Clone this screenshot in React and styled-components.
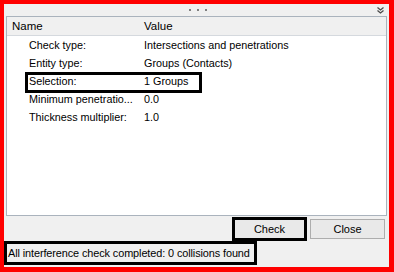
import React from 'react';
import styled, { createGlobalStyle } from 'styled-components';

const GlobalStyle = createGlobalStyle`
  body {
    margin: 0;
    font-family: "Liberation Sans", Arial, sans-serif;
  }
`;

const rows = [
  { name: 'Check type:', value: 'Intersections and penetrations' },
  { name: 'Entity type:', value: 'Groups (Contacts)' },
  { name: 'Selection:', value: '1 Groups', marked: true },
  { name: 'Minimum penetratio...', value: '0.0' },
  { name: 'Thickness multiplier:', value: '1.0' },
];

const Chevrons = () => (
  <svg width="7" height="7" viewBox="0 0 7 7">
    <path d="M0.5 0.5 L3.5 3 L6.5 0.5 M0.5 3.5 L3.5 6 L6.5 3.5" stroke="#4a4a4a" strokeWidth="1.3" fill="none" />
  </svg>
);

const App = () => {
  return (
    <Frame>
      <GlobalStyle />
      <TopStrip>
        <span />
        <Dots>
          <Dot />
          <Dot />
          <Dot />
        </Dots>
        <Collapse>
          <Chevrons />
        </Collapse>
      </TopStrip>
      <Grid>
        <HeaderRow>
          <HeadCell $first>Name</HeadCell>
          <HeadCell>Value</HeadCell>
        </HeaderRow>
        {rows.map(r => (
          <Row key={r.name}>
            <Label>{r.name}</Label>
            <Value>{r.value}</Value>
            {r.marked && <Mark />}
          </Row>
        ))}
      </Grid>
      <Buttons>
        <Button $marked>Check</Button>
        <Button>Close</Button>
      </Buttons>
      <StatusArea>
        <Status>All interference check completed: 0 collisions found</Status>
      </StatusArea>
    </Frame>
  );
};

export default App;

const Frame = styled.div`
  width: 394px;
  height: 272px;
  box-sizing: border-box;
  border-style: solid;
  border-color: #ff0000;
  border-width: 4px 5px 5px 4px;
  background: #f0f0f0;
  display: flex;
  flex-direction: column;
  font-size: 10.8px;
  color: #000;
`;

const TopStrip = styled.div`
  height: 12px;
  display: grid;
  grid-template-columns: 1fr auto 1fr;
  align-items: center;
`;

const Dots = styled.div`
  display: flex;
  gap: 6px;
  margin-left: 2px;
`;

const Dot = styled.div`
  width: 2px;
  height: 2px;
  background: #808080;
`;

const Collapse = styled.div`
  justify-self: end;
  margin-right: 5px;
  display: flex;
`;

const Grid = styled.div`
  margin: 0 2px;
  height: 200px;
  box-sizing: border-box;
  border: 1px solid #aab3bd;
  background: #fff;
  flex: none;
`;

const HeaderRow = styled.div`
  height: 18px;
  border-bottom: 1px solid #d5d9de;
  background: #f0f0f0;
  display: grid;
  grid-template-columns: 137px 1fr;
  align-items: center;
  font-size: 11.5px;
`;

const HeadCell = styled.div`
  padding-left: ${p => (p.$first ? '5px' : '0')};
`;

const Row = styled.div`
  position: relative;
  height: 18px;
  display: grid;
  grid-template-columns: 137px 1fr;
  align-items: center;
`;

const Label = styled.div`
  padding-left: 22px;
  white-space: nowrap;
`;

const Value = styled.div`
  white-space: nowrap;
`;

const Mark = styled.div`
  position: absolute;
  left: 18px;
  top: 0;
  width: 177px;
  height: 21px;
  box-sizing: border-box;
  border: 3px solid #000;
`;

const Buttons = styled.div`
  height: 25px;
  display: flex;
  justify-content: flex-end;
  align-items: center;
  gap: 3px;
  padding-right: 4px;
`;

const Button = styled.button`
  width: 75px;
  height: ${p => (p.$marked ? '24px' : '20px')};
  box-sizing: border-box;
  margin: 0;
  padding: 0;
  border: ${p => (p.$marked ? '3px solid #000' : '1px solid #adadad')};
  background: #e9e9e9;
  font-family: "Liberation Sans", Arial, sans-serif;
  font-size: 11px;
  color: #000;
`;

const StatusArea = styled.div`
  flex: 1;
  display: flex;
  align-items: flex-start;
`;

const Status = styled.div`
  width: 253px;
  height: 24px;
  box-sizing: border-box;
  border: 3px solid #000;
  padding-left: 1px;
  display: flex;
  align-items: center;
  white-space: nowrap;
  font-size: 10.9px;
  letter-spacing: -0.1px;
`;
